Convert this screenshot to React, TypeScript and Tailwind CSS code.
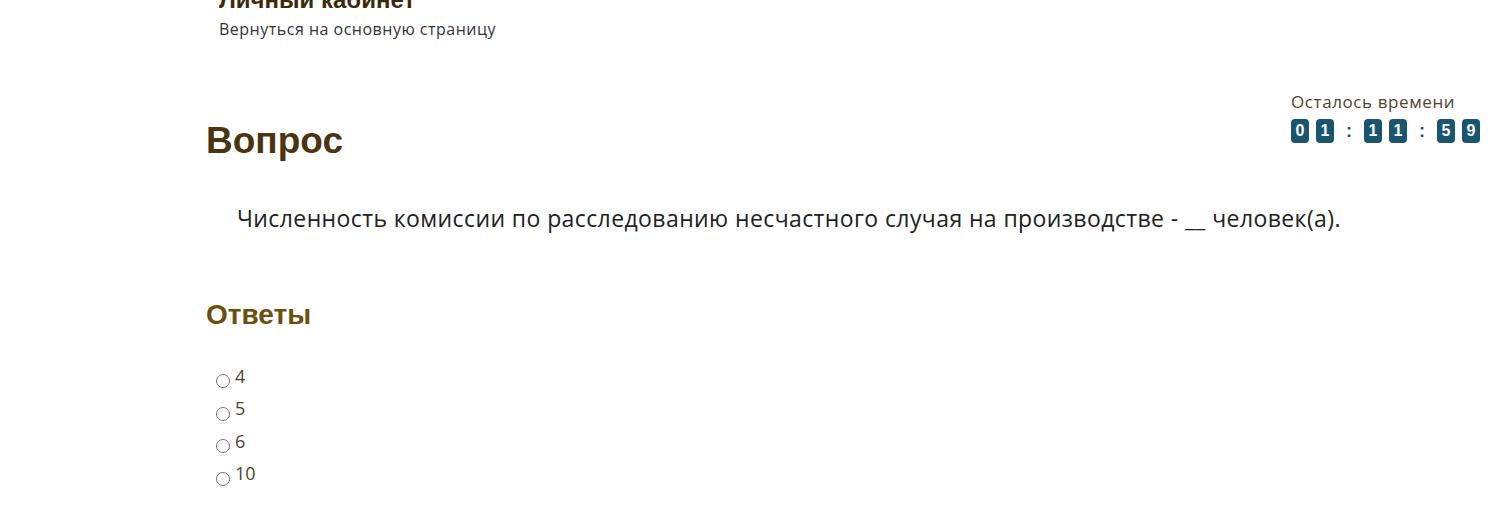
const DIGITS = [['0', '1'], ['1', '1'], ['5', '9']]
const ANSWERS = ['4', '5', '6', '10']

function Timer() {
  return (
    <div className="flex flex-col items-start">
      <span className="text-[17px] leading-5 tracking-[0.6px] text-[#4d4530]">Осталось времени</span>
      <div className="mt-[7px] flex items-center">
        {DIGITS.map((pair, i) => (
          <div key={i} className="flex items-center">
            {i > 0 && <span className="w-[30px] text-center text-[18px] font-bold leading-none text-[#1a5570] [font-family:'Liberation_Sans',sans-serif]">:</span>}
            <div className="flex gap-[7px]">
              {pair.map((d, j) => (
                <span
                  key={j}
                  className="flex h-[24px] w-[18px] items-center justify-center rounded-[4px] bg-[#1a5570] text-[16px] font-bold text-white [font-family:'Liberation_Sans',sans-serif]"
                >
                  {d}
                </span>
              ))}
            </div>
          </div>
        ))}
      </div>
    </div>
  )
}

export default function App() {
  return (
    <div className="relative h-[531px] w-[1512px] overflow-hidden bg-white [font-family:'Open_Sans','Noto_Sans',sans-serif]">
      <div className="ml-[219px] mt-[-14px]">
        <h2 className="text-[24px] font-bold leading-7 text-[#3b2a0c] [font-family:'Liberation_Sans',sans-serif]">Личный кабинет</h2>
        <a className="mt-[3px] block text-[16px] tracking-[0.5px] text-[#333]">Вернуться на основную страницу</a>
      </div>

      <div className="absolute right-[32px] top-[92px]">
        <Timer />
      </div>

      <div className="ml-[206px] mt-[80px]">
        <h1 className="text-[37px] font-bold leading-10 text-[#4a3510] [font-family:'Liberation_Sans',sans-serif]">Вопрос</h1>
        <p className="ml-[31px] mt-[41px] text-[23px] leading-8 tracking-[0.4px] text-[#222]">
          Численность комиссии по расследованию несчастного случая на производстве - __ человек(а).
        </p>
        <h3 className="mt-[65px] text-[28px] font-bold leading-8 text-[#6b4f0f] [font-family:'Liberation_Sans',sans-serif]">Ответы</h3>
        <div className="ml-[10px] mt-[31px] flex flex-col">
          {ANSWERS.map((a) => (
            <label key={a} className="flex h-[32.5px] items-center gap-[5px] text-[18px] text-[#4d4530]">
              <input type="radio" name="answer" className="mt-[6px] h-[14px] w-[14px]" />
              <span className="mt-[-4px]">{a}</span>
            </label>
          ))}
        </div>
      </div>
    </div>
  )
}
